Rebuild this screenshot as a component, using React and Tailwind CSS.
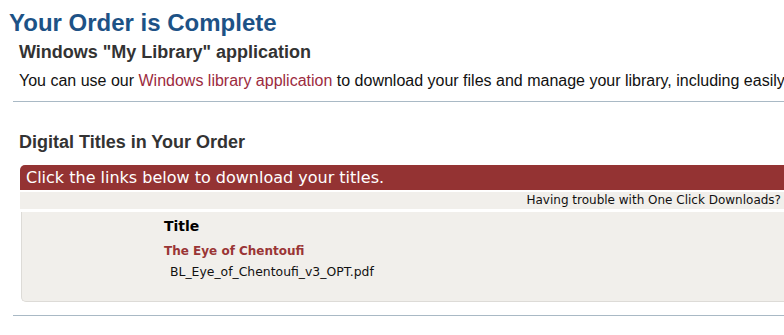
export default function App() {
  const arial = { fontFamily: '"Liberation Sans", Arial, sans-serif' };
  const verdana = { fontFamily: '"DejaVu Sans", Verdana, sans-serif' };
  return (
    <div className="w-[784px] h-[335px] overflow-hidden bg-white">
      <div style={arial}>
        <h1 className="pt-[9px] pl-[9px] text-[24px] leading-[28px] font-bold text-[#1d5286] whitespace-nowrap">
          Your Order is Complete
        </h1>
        <div className="pl-[13px]">
          <h2 className="mt-[4px] pl-[6px] text-[18px] leading-[22px] font-bold text-[#333333] whitespace-nowrap">
            Windows "My Library" application
          </h2>
          <p className="mt-[8px] pl-[6px] text-[16px] leading-[20px] text-[#111111] whitespace-nowrap">
            You can use our <span className="text-[#9c2b3e]">Windows library application</span> to download your files and manage your library, including easily
          </p>
          <div className="mt-[10px] h-px bg-[#a9b9c5]" />
          <h2 className="mt-[29px] pl-[6px] text-[18px] leading-[22px] font-bold text-[#333333] whitespace-nowrap">
            Digital Titles in Your Order
          </h2>
          <div className="mt-[12px] ml-[7px]" style={verdana}>
            <div className="h-[25px] leading-[25px] bg-[#943333] text-white text-[16px] pl-[6px] rounded-tl-[5px] whitespace-nowrap">
              Click the links below to download your titles.
            </div>
            <div className="mt-[2px] h-[17px] leading-[17px] bg-[#f1efeb] text-[12px] text-[#111111] text-right pr-[3px] whitespace-nowrap">
              Having trouble with One Click Downloads?
            </div>
            <div className="mt-[3px] ml-px h-[90px] bg-[#f1efeb] border-l border-b border-[#dddbd7] rounded-bl-[5px] pl-[142px] pt-[5px]">
              <div className="text-[14px] leading-[18px] font-bold text-black">Title</div>
              <div className="mt-[8px] text-[12px] leading-[16px] font-bold text-[#9a3535]">The Eye of Chentoufi</div>
              <div className="mt-[5px] pl-[6px] text-[12.4px] leading-[16px] text-[#111111]">BL_Eye_of_Chentoufi_v3_OPT.pdf</div>
            </div>
          </div>
          <div className="mt-[13px] h-px bg-[#a9b9c5]" />
        </div>
      </div>
    </div>
  );
}
